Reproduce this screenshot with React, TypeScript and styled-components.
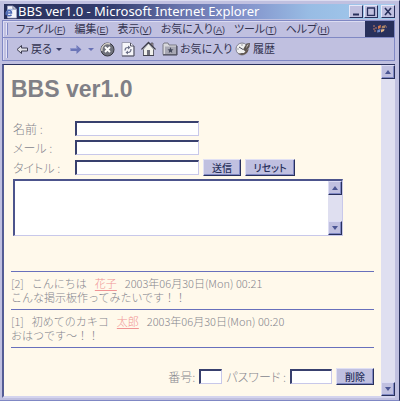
import React from "react";
import styled, { createGlobalStyle } from "styled-components";

const navy = "#28305c";
const lilac = "#c0c0e0";
const edge = "#8088c4";
const cream = "#fff9eb";
const grey = "#86868e";

const GlobalStyle = createGlobalStyle`
  * { box-sizing: border-box; }
  body {
    margin: 0;
    font-family: "Liberation Sans", "Noto Sans CJK JP", sans-serif;
    background: ${lilac};
  }
  button, input, textarea { font-family: inherit; margin: 0; border-radius: 0; }
`;

const Window = styled.div`
  display: flex;
  flex-direction: column;
  min-height: 100vh;
  padding: 3px 4px 2px 2px;
  background: ${lilac};
  border-top: 1px solid #dcdcf0;
  border-right: 1px solid ${navy};
  border-bottom: 1px solid ${edge};
`;

const TitleBar = styled.header`
  display: flex;
  align-items: center;
  height: 15px;
  margin-left: 2px;
  padding-left: 1px;
  gap: 1px;
  background: linear-gradient(90deg, #28305a 0%, #343e70 28%, #6874ac 45%, #8494cc 62%, #98bce4 78%, #a4ccee 100%);
`;

const Title = styled.h1`
  flex: 1;
  margin: 0;
  color: #fff;
  font: 13px/15px "Noto Sans", sans-serif;
  white-space: nowrap;
`;

const WindowButton = styled.button<{ $apart?: boolean }>`
  width: 14px;
  height: 13px;
  margin-left: ${(p) => (p.$apart ? 2 : 0)}px;
  padding: 0;
  display: flex;
  align-items: center;
  justify-content: center;
  background: ${lilac};
  border: 1px solid;
  border-color: #e8e8f8 ${navy} ${navy} #e8e8f8;
`;

const Bars = styled.div`
  margin-top: 1px;
  border: 1px solid ${edge};
  box-shadow: inset 1px 1px #dcdcf2;
`;

const Bar = styled.div<{ $height: number; $line?: boolean }>`
  display: flex;
  align-items: center;
  height: ${(p) => p.$height}px;
  padding-left: 3px;
  color: #343450;
  border-bottom: ${(p) => (p.$line ? `1px solid ${edge}` : "0")};
`;

const Grip = styled.span`
  align-self: stretch;
  width: 2px;
  margin: 2px 8px 2px 0;
  border-left: 1px solid #e4e4f8;
  border-right: 1px solid ${edge};
`;

const Menus = styled.nav`
  display: flex;
  flex: 1;
  gap: 9px;
`;

const MenuButton = styled.button`
  padding: 0;
  border: 0;
  background: none;
  color: inherit;
  font-size: 11px;
  line-height: 16px;
  font-feature-settings: "palt";
  white-space: nowrap;
`;

const Key = styled.span`
  font-size: 9px;
  u { text-underline-offset: 1px; }
`;

const Throbber = styled.div`
  display: flex;
  align-items: center;
  justify-content: center;
  align-self: stretch;
  width: 29px;
  background: ${navy};
`;

const ToolButton = styled.button<{ $width: number }>`
  display: flex;
  align-items: center;
  gap: 2px;
  width: ${(p) => p.$width}px;
  padding: 0;
  border: 0;
  background: none;
  color: inherit;
  font-size: 11px;
  line-height: 16px;
  font-feature-settings: "palt";
  white-space: nowrap;
  svg { flex: none; }
`;

const Viewport = styled.div`
  display: flex;
  flex: 1;
  margin-top: 3px;
  border-top: 1px solid ${navy};
  border-left: 2px solid #545c94;
  border-bottom: 2px solid #d4d4ee;
`;

const Page = styled.main`
  flex: 1;
  min-width: 0;
  padding: 10px 7px 0;
  background: ${cream};
  color: ${grey};
  font-family: "Noto Sans CJK JP", sans-serif;
  font-weight: 300;
`;

const Heading = styled.h2`
  margin: 0 0 16px;
  color: #808086;
  font: bold 23px/28px "Liberation Sans", Arial, sans-serif;
`;

const Fields = styled.div`
  display: grid;
  grid-template-rows: 19px 19px 21px;
`;

const Field = styled.div`
  display: flex;
  align-items: center;
  padding-left: 2px;
`;

const Label = styled.label`
  width: 62px;
  font-size: 12px;
  line-height: 16px;
  font-feature-settings: "palt";
`;

const TextBox = styled.input<{ $width: number }>`
  width: ${(p) => p.$width}px;
  height: 15px;
  padding: 0 2px;
  font-size: 11px;
  background: #fff;
  border: 1px solid;
  border-width: 2px 1px 1px 2px;
  border-color: #38406e #c8c8ea #c8c8ea #38406e;
`;

const PushButton = styled.button<{ $width: number }>`
  width: ${(p) => p.$width}px;
  height: 17px;
  margin-left: 4px;
  padding: 0;
  background: ${lilac};
  border: 1px solid;
  border-color: #e0e0f4 ${navy} ${navy} #e0e0f4;
  box-shadow: inset -1px -1px ${edge};
  color: ${navy};
  font-size: 10px;
  font-weight: 500;
  line-height: 13px;
  font-feature-settings: "palt";
`;

const MessageBox = styled.div`
  display: flex;
  width: 91%;
  max-width: 520px;
  height: 57px;
  margin: 1px 0 0 2px;
  background: #fff;
  border: 1px solid;
  border-width: 2px 1px 1px 2px;
  border-color: #4c548c #c8c8ea #c8c8ea #4c548c;
`;

const MessageInput = styled.textarea`
  flex: 1;
  min-width: 0;
  padding: 2px;
  border: 0;
  outline: 0;
  resize: none;
  overflow: hidden;
  background: #fff;
  font-size: 11px;
`;

const ScrollTrack = styled.div`
  display: flex;
  flex-direction: column;
  justify-content: space-between;
  width: 14px;
  background: #dfdff0;
`;

const ScrollButton = styled.button`
  display: flex;
  align-items: center;
  justify-content: center;
  height: 14px;
  padding: 0;
  background: ${lilac};
  border: 1px solid;
  border-color: #dcdcf4 ${navy} ${navy} #dcdcf4;
  box-shadow: inset -1px -1px ${edge};
`;

const Posts = styled.section`
  margin-top: 35px;
  border-top: 1px solid #6870bc;
`;

const Post = styled.article`
  height: 38px;
  padding-top: 4px;
  border-bottom: 1px solid #6870bc;
  font-size: 11px;
  line-height: 14px;
`;

const PostHead = styled.div`
  display: flex;
  gap: 8px;
  white-space: nowrap;
`;

const Author = styled.a`
  color: #f09494;
  text-underline-offset: 2px;
`;

const Message = styled.p`
  margin: 0;
`;

const DeleteForm = styled.form`
  display: flex;
  align-items: center;
  justify-content: flex-end;
  margin: 20px 0 11px;
  font-size: 12px;
  line-height: 16px;
  font-feature-settings: "palt";
  label { margin: 0 4px; }
`;

function Arrow({ up }: { up?: boolean }) {
  return (
    <svg width="6" height="4" viewBox="0 0 6 4" aria-hidden="true">
      <path d={up ? "M0 4L3 0L6 4Z" : "M0 0H6L3 4Z"} fill="#4c5694" />
    </svg>
  );
}

function Scrollbar() {
  return (
    <ScrollTrack>
      <ScrollButton type="button" aria-label="上へスクロール"><Arrow up /></ScrollButton>
      <ScrollButton type="button" aria-label="下へスクロール"><Arrow /></ScrollButton>
    </ScrollTrack>
  );
}

function Caret({ faded }: { faded?: boolean }) {
  return (
    <svg width="6" height="3" viewBox="0 0 6 3" aria-hidden="true">
      <path d="M0 0H6L3 3Z" fill={faded ? "#6870b4" : "#3c4068"} />
    </svg>
  );
}

function PageIcon() {
  return (
    <svg width="12" height="14" viewBox="0 0 12 14" aria-hidden="true">
      <path d="M2.5 1H8L11.5 4V13H2.5Z" fill="#f4f4fa" stroke="#a4a8c8" strokeWidth=".7" />
      <path d="M8 1V4H11" fill="none" stroke="#747894" />
      <path d="M1.5 8H6.5C6.5 4.5 2 4.5 1.5 8C1.5 11 5 11.5 6.5 9.8" fill="none" stroke="#4c68b4" strokeWidth="1.5" />
      <path d="M1 10C0 5 5 3 8 5" fill="none" stroke="#6c8cd0" strokeWidth=".7" />
    </svg>
  );
}

function BackIcon() {
  return (
    <svg width="13" height="11" viewBox="0 0 13 11" aria-hidden="true">
      <path d="M1 5.5L5.5 1.5V4H11.5V7H5.5V9.5Z" fill="#e0e0e8" stroke="#3c3c50" />
    </svg>
  );
}

function ForwardIcon() {
  return (
    <svg width="12" height="11" viewBox="0 0 12 11" aria-hidden="true">
      <path d="M11.5 5.5L6.5 1V4H.5V7H6.5V10Z" fill="#6c76b8" />
      <path d="M1 4.5H7V3" fill="none" stroke="#8c94cc" />
    </svg>
  );
}

function StopIcon() {
  return (
    <svg width="15" height="15" viewBox="0 0 15 15" aria-hidden="true">
      <circle cx="7.5" cy="7.5" r="6.5" fill="#70727c" stroke="#34343c" />
      <path d="M2 9A6 6 0 0 1 10 2" fill="none" stroke="#d4d0c8" strokeWidth="1.4" />
      <path d="M5 5L10 10M10 5L5 10" stroke="#fff" strokeWidth="1.8" />
    </svg>
  );
}

function RefreshIcon() {
  return (
    <svg width="14" height="15" viewBox="0 0 14 15" aria-hidden="true">
      <path d="M1 .5H9.5L13 4V14H1Z" fill="#f6f6fa" stroke="#9c9cb0" />
      <path d="M9.5 1V4H13M13 4V14H1" fill="none" stroke="#505060" />
      <path d="M4 8.5C4 6 5.5 5.5 7 5.5M10 7C10 9.5 8.5 10.5 7 10.5" fill="none" stroke="#6c7088" strokeWidth="1.2" />
      <path d="M7 3.5L9.5 5.5L7 7.5ZM7 8.5L4.5 10.5L7 12.5Z" fill="#6c7088" />
    </svg>
  );
}

function HomeIcon() {
  return (
    <svg width="15" height="16" viewBox="0 0 15 16" aria-hidden="true">
      <path d="M10 2H12V6H10Z" fill="#b4a4a4" stroke="#444450" strokeWidth=".7" />
      <path d="M2.5 8L7.5 2.5L12.5 8V14.5H2.5Z" fill="#f0f0ec" stroke="#60606c" />
      <path d="M.5 8.5L7.5 1.5L14.5 8.5" fill="none" stroke="#3c3c48" strokeWidth="1.3" />
      <path d="M1.5 9L7.5 3L13.5 9" fill="none" stroke="#e8e8ea" strokeWidth=".6" />
      <rect x="6" y="9" width="3" height="5.5" fill="#70707c" />
      <path d="M2 14.5H13" stroke="#444450" />
    </svg>
  );
}

function FavoritesIcon() {
  return (
    <svg width="16" height="14" viewBox="0 0 16 14" aria-hidden="true">
      <path d="M1 2.5L2 1H6L7 3H14.5V12.5H1Z" fill="#d8d8dc" stroke="#787884" />
      <path d="M3 4.5H14V12H3Z" fill="#a8a8b4" />
      <path d="M8.5 5L9.3 7.2L11.5 7.4L9.8 8.8L10.3 11L8.5 9.8L6.7 11L7.2 8.8L5.5 7.4L7.7 7.2Z" fill="#44485c" />
      <path d="M1 13H15V4" fill="none" stroke="#404050" />
    </svg>
  );
}

function HistoryIcon() {
  return (
    <svg width="16" height="16" viewBox="0 0 16 16" aria-hidden="true">
      <circle cx="7" cy="8" r="6" fill="#f0f0f0" stroke="#808090" />
      <path d="M3 12.5A6.5 6.5 0 0 0 13.5 8L11.5 9L9 12Z" fill="#62564e" />
      <path d="M8 8.5L11.5 2.5L15 2L14.5 6L10.5 10.5Z" fill="#5c5450" />
      <path d="M12 4L14 3L11 7.5Z" fill="#c8c0bc" />
      <path d="M8 8.5L4 6M7 3.5V4.5M2.5 8H3.5M7 12V13" fill="none" stroke="#4c4c5c" />
    </svg>
  );
}

function WindowsFlag() {
  return (
    <svg width="16" height="10" viewBox="0 0 16 10" aria-hidden="true">
      <path d="M6 2L9 1L8.5 4L6 5Z" fill="#d07850" />
      <path d="M10 2L14 1L13 4L9.5 4.5Z" fill="#a88468" />
      <path d="M5.5 6L8.5 5L8 8L5 8.5Z" fill="#708ccc" />
      <path d="M9 5.5L12.5 5L12 7L9 8.5Z" fill="#e0b488" />
      <path d="M1 2H3M3 4H5M1 5H3M2 7H4M14 3H15" stroke="#c07c64" />
    </svg>
  );
}

const menus = [
  ["ファイル", "F"],
  ["編集", "E"],
  ["表示", "V"],
  ["お気に入り", "A"],
  ["ツール", "T"],
  ["ヘルプ", "H"],
];

const posts = [
  { no: 2, title: "こんにちは", author: "花子", date: "2003年06月30日(Mon) 00:21", text: "こんな掲示板作ってみたいです！！" },
  { no: 1, title: "初めてのカキコ", author: "太郎", date: "2003年06月30日(Mon) 00:20", text: "おはつです～！！" },
];

export default function App() {
  return (
    <>
      <GlobalStyle />
      <Window lang="ja">
        <TitleBar>
          <PageIcon />
          <Title>BBS ver1.0 - Microsoft Internet Explorer</Title>
          <WindowButton aria-label="最小化">
            <svg width="10" height="9" viewBox="0 0 10 9"><path d="M2 7.5H8" stroke={navy} strokeWidth="2" /></svg>
          </WindowButton>
          <WindowButton aria-label="最大化">
            <svg width="10" height="9" viewBox="0 0 10 9"><path d="M1.5 1V8.5H8.5V1M1 1H9" fill="none" stroke={navy} strokeWidth="1.3" /></svg>
          </WindowButton>
          <WindowButton aria-label="閉じる" $apart>
            <svg width="10" height="9" viewBox="0 0 10 9"><path d="M2 1L8 8M8 1L2 8" stroke={navy} strokeWidth="1.6" /></svg>
          </WindowButton>
        </TitleBar>
        <Bars>
          <Bar $height={17} $line>
            <Grip />
            <Menus>
              {menus.map(([name, key]) => (
                <MenuButton key={key}>{name}<Key>(<u>{key}</u>)</Key></MenuButton>
              ))}
            </Menus>
            <Throbber><WindowsFlag /></Throbber>
          </Bar>
          <Bar $height={22}>
            <Grip />
            <ToolButton $width={40}><BackIcon />戻る</ToolButton>
            <ToolButton $width={14} aria-label="戻る履歴"><Caret /></ToolButton>
            <ToolButton $width={18} aria-label="進む"><ForwardIcon /></ToolButton>
            <ToolButton $width={12} aria-label="進む履歴"><Caret faded /></ToolButton>
            <ToolButton $width={21} aria-label="中止"><StopIcon /></ToolButton>
            <ToolButton $width={20} aria-label="更新"><RefreshIcon /></ToolButton>
            <ToolButton $width={21} aria-label="ホーム"><HomeIcon /></ToolButton>
            <ToolButton $width={73}><FavoritesIcon />お気に入り</ToolButton>
            <ToolButton $width={48}><HistoryIcon />履歴</ToolButton>
          </Bar>
        </Bars>
        <Viewport>
          <Page>
            <Heading>BBS ver1.0</Heading>
            <form onSubmit={(e) => e.preventDefault()}>
              <Fields>
                <Field>
                  <Label htmlFor="name">名前 :</Label>
                  <TextBox id="name" $width={124} />
                </Field>
                <Field>
                  <Label htmlFor="mail">メール :</Label>
                  <TextBox id="mail" $width={124} />
                </Field>
                <Field>
                  <Label htmlFor="title">タイトル :</Label>
                  <TextBox id="title" $width={124} />
                  <PushButton $width={38}>送信</PushButton>
                  <PushButton $width={50} type="reset">リセット</PushButton>
                </Field>
              </Fields>
              <MessageBox>
                <MessageInput aria-label="本文" />
                <Scrollbar />
              </MessageBox>
            </form>
            <Posts>
              {posts.map((p) => (
                <Post key={p.no}>
                  <PostHead>
                    <span>[{p.no}]</span>
                    <span>{p.title}</span>
                    <Author href="#">{p.author}</Author>
                    <time>{p.date}</time>
                  </PostHead>
                  <Message>{p.text}</Message>
                </Post>
              ))}
            </Posts>
            <DeleteForm onSubmit={(e) => e.preventDefault()}>
              <label htmlFor="number">番号:</label>
              <TextBox id="number" $width={23} />
              <label htmlFor="password">パスワード :</label>
              <TextBox id="password" type="password" $width={42} />
              <PushButton $width={38}>削除</PushButton>
            </DeleteForm>
          </Page>
          <Scrollbar />
        </Viewport>
      </Window>
    </>
  );
}
